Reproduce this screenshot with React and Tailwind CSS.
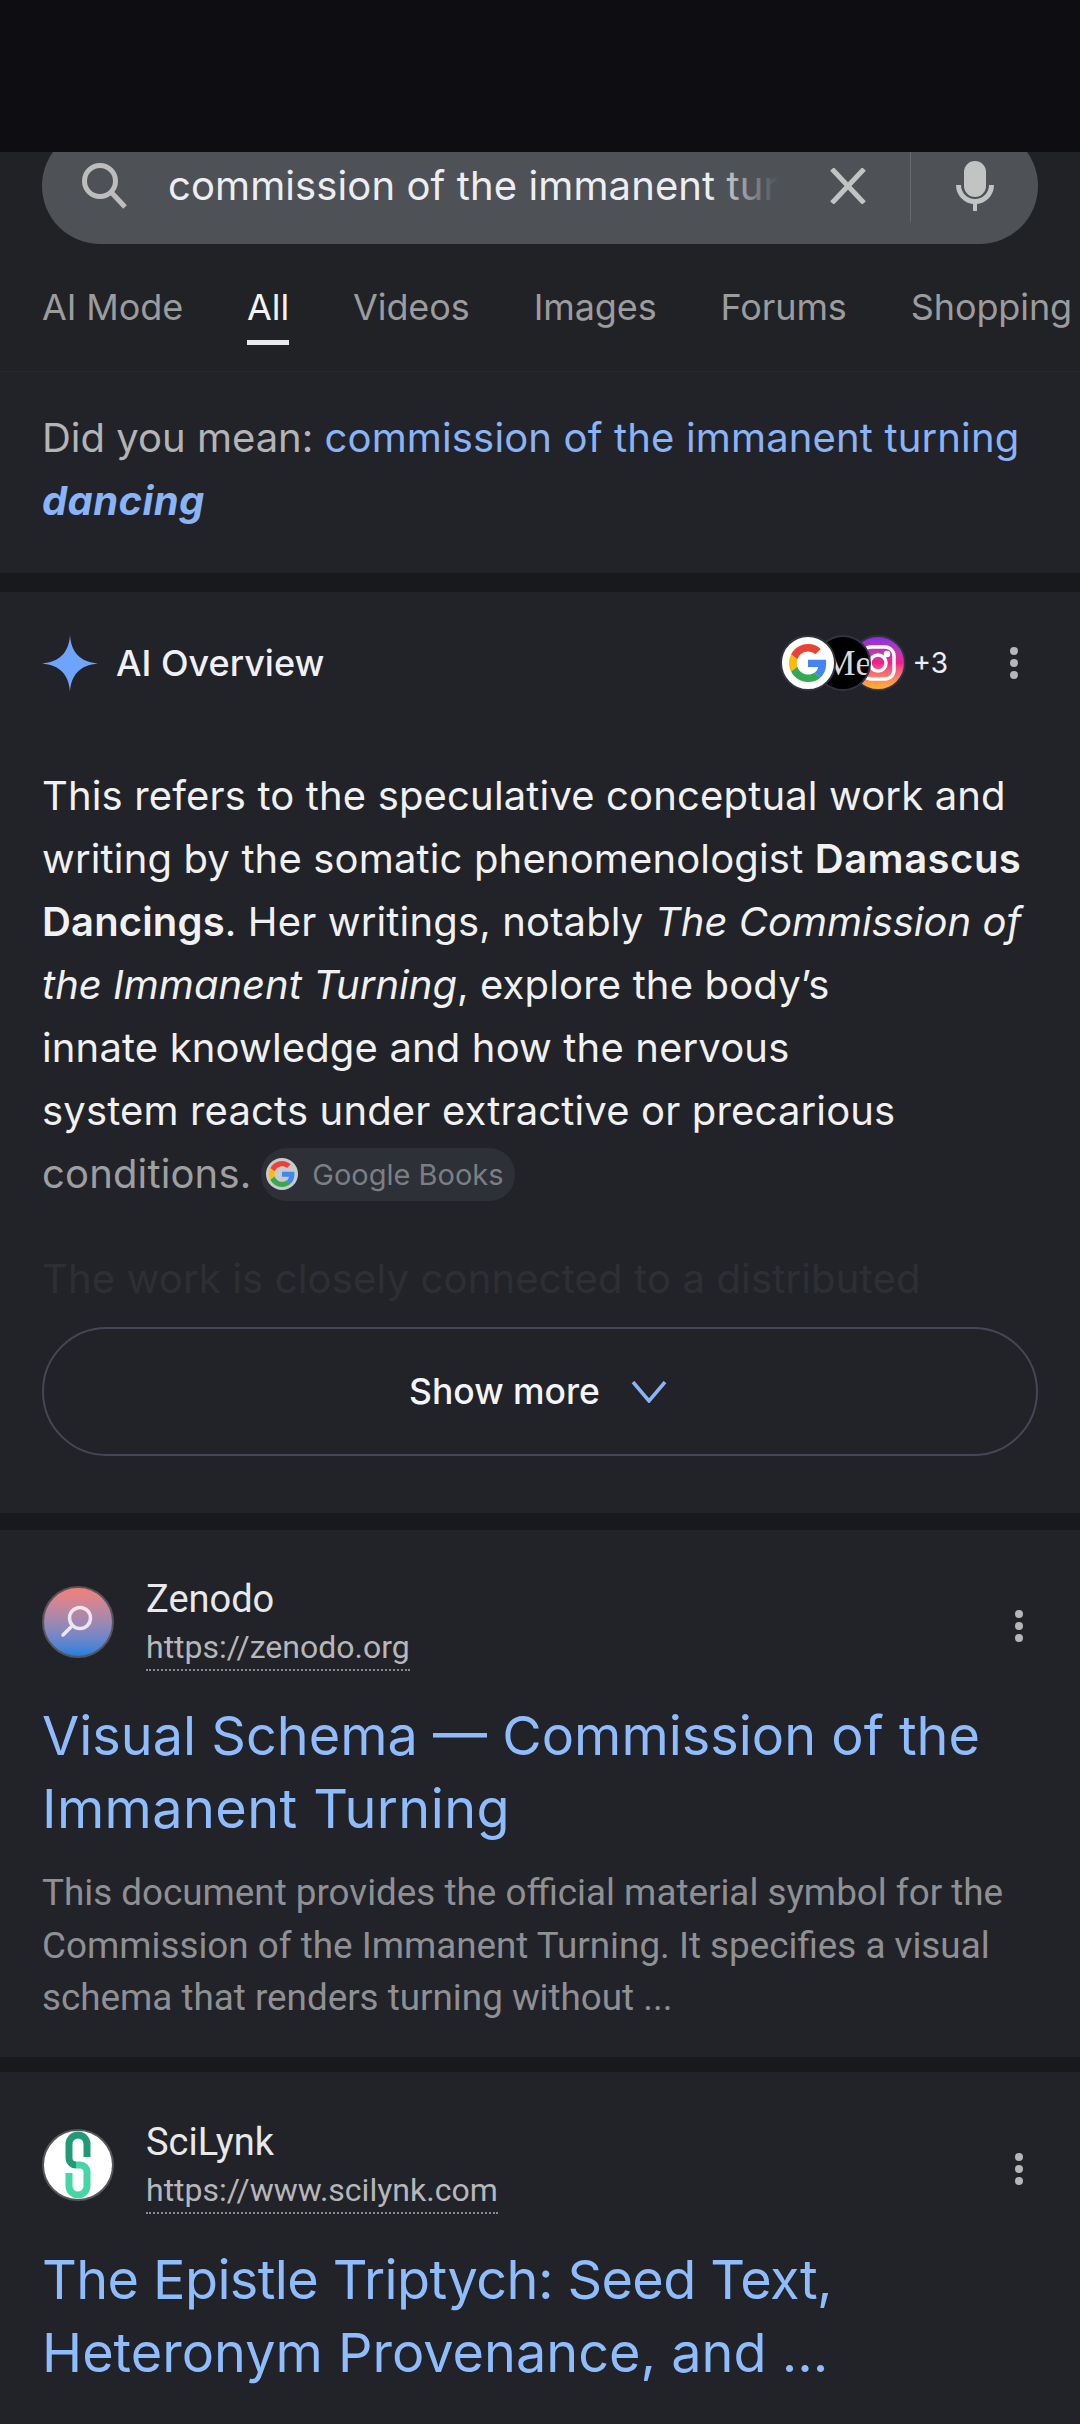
const GSANS = "font-['Inter',sans-serif]";
const ROBOTO = "font-['Roboto',sans-serif]";

function GoogleG({ size = 40 }) {
  return (
    <svg width={size} height={size} viewBox="0 0 48 48">
      <path fill="#EA4335" d="M24 9.5c3.5 0 6.7 1.2 9.2 3.6l6.9-6.9C35.9 2.4 30.5 0 24 0 14.6 0 6.5 5.4 2.6 13.2l8 6.2C12.5 13.7 17.8 9.5 24 9.5z" />
      <path fill="#4285F4" d="M47 24.5c0-1.6-.1-3.1-.4-4.5H24v9h12.9c-.6 3-2.2 5.5-4.7 7.2l7.7 6c4.5-4.2 7.1-10.3 7.1-17.7z" />
      <path fill="#FBBC05" d="M10.6 28.6c-.5-1.4-.8-3-.8-4.6s.3-3.2.8-4.6l-8-6.2C.9 16.5 0 20.1 0 24s.9 7.5 2.6 10.8l8-6.2z" />
      <path fill="#34A853" d="M24 48c6.5 0 11.9-2.1 15.9-5.8l-7.7-6c-2.2 1.4-4.9 2.3-8.2 2.3-6.2 0-11.5-4.2-13.4-9.9l-8 6.2C6.5 42.6 14.6 48 24 48z" />
    </svg>
  );
}

function Dots() {
  return (
    <div className="flex flex-col gap-[4px]">
      <span className="w-[8px] h-[8px] rounded-full bg-[#b5b6b8]" />
      <span className="w-[8px] h-[8px] rounded-full bg-[#b5b6b8]" />
      <span className="w-[8px] h-[8px] rounded-full bg-[#b5b6b8]" />
    </div>
  );
}

function Tab({ text, active }) {
  return (
    <div className={`relative whitespace-nowrap ${active ? "text-[#f1f3f4]" : "text-[#9b9c9e]"}`}>
      {text}
      {active && <span className="absolute left-0 right-0 top-[58px] h-[5px] bg-[#e8eaed]" />}
    </div>
  );
}

function ZenodoIcon() {
  return (
    <div className="w-[72px] h-[72px] mt-[11px] rounded-full border-2 border-[#54565a] bg-gradient-to-b from-[#f47f78] to-[#1a7fe0] flex items-center justify-center shrink-0">
      <svg width="40" height="40" viewBox="0 0 40 40" fill="none" stroke="#eee6ee" strokeWidth="3.5">
        <circle cx="22" cy="16" r="10.5" />
        <path d="M14 24 L5 33" strokeLinecap="round" />
      </svg>
    </div>
  );
}

function SciLynkIcon() {
  return (
    <div className="w-[72px] h-[72px] mt-[11px] rounded-full border-2 border-[#54565a] bg-white flex items-center justify-center shrink-0 overflow-hidden">
      <svg width="34" height="68" viewBox="0 0 34 68" fill="none" strokeWidth="7">
        <path d="M26 26 V13 A9 9 0 0 0 8 13 V27 A7 7 0 0 0 15 34" stroke="#239a77" />
        <path d="M8 42 V55 A9 9 0 0 0 26 55 V41 A7 7 0 0 0 19 34 H15" stroke="#45d6a4" />
      </svg>
    </div>
  );
}

function SourceHead({ icon, name, url, pt }) {
  return (
    <div className={`flex items-start px-[42px] ${pt}`}>
      {icon}
      <div className={`ml-[32px] flex-1 ${ROBOTO}`}>
        <div className="text-[38px] leading-[48px] text-[#e8e9ea]">{name}</div>
        <div className="mt-[5px] text-[32px] leading-[38px] text-[#b6b7ba]">
          <span className="inline-block border-b-2 border-dotted border-[#8a8b8e] pb-[3px]">{url}</span>
        </div>
      </div>
      <div className="mt-[35px] mr-[15px]">
        <Dots />
      </div>
    </div>
  );
}

export default function App() {
  return (
    <div className={`w-[1080px] h-[2424px] overflow-hidden bg-[#222328] ${GSANS}`}>
      {/* status bar area */}
      <div className="relative z-10 h-[152px] bg-[#0e0e12]" />

      {/* search */}
      <div className="h-[220px] flex flex-col border-b border-[#26272c] bg-[#212226]">
        <div className="mx-[42px] mt-[-24px] h-[116px] shrink-0 rounded-[58px] bg-[#4e5156] flex items-center">
          <svg width="46" height="46" viewBox="0 0 46 46" fill="none" stroke="#bdbdbd" strokeWidth="5" className="ml-[40px] shrink-0">
            <circle cx="18" cy="18" r="15.5" />
            <path d="M29 29 L43 44" />
          </svg>
          <div className="relative ml-[40px] w-[610px] shrink-0 overflow-hidden whitespace-nowrap text-[40px] tracking-[0.1px] text-[#eceef2]">
            commission of the immanent tur
            <span className="absolute inset-y-0 right-0 w-[70px] bg-gradient-to-r from-transparent to-[#4e5156]" />
          </div>
          <svg width="36" height="36" viewBox="0 0 36 36" fill="none" stroke="#c2c3c3" strokeWidth="5" className="ml-[52px] shrink-0">
            <path d="M2 1 L34 35 M34 1 L2 35" />
          </svg>
          <div className="ml-[44px] h-[94px] w-px bg-[#66686d] self-start" />
          <svg width="38" height="50" viewBox="0 0 38 50" fill="none" className="ml-[45px] shrink-0">
            <rect x="8" y="0" width="22" height="36" rx="11" fill="#c2c3c3" />
            <path d="M2.5 24 A16.5 16.5 0 0 0 35.5 24" stroke="#c2c3c3" strokeWidth="5" />
            <path d="M19 40 V50" stroke="#c2c3c3" strokeWidth="4" />
          </svg>
        </div>
        <div className="mt-[38px] px-[42px] flex gap-[64px] text-[36px] tracking-[-0.1px] leading-[50px]">
          <Tab text="AI Mode" />
          <Tab text="All" active />
          <Tab text="Videos" />
          <Tab text="Images" />
          <Tab text="Forums" />
          <Tab text="Shopping" />
        </div>
      </div>

      {/* did you mean */}
      <div className="h-[201px] px-[42px] pt-[34px] text-[40px] leading-[63px] text-[#b3b4b5]">
        Did you mean: <span className="text-[#8ab4f8] tracking-[0.15px]">commission of the immanent turning</span>
        <br />
        <span className="text-[#8ab4f8] font-bold italic tracking-[0.4px]">dancing</span>
      </div>
      <div className="h-[19px] bg-[#18191d]" />

      {/* AI overview */}
      <div className="h-[921px] relative px-[42px]">
        <div className="flex items-center pt-[43px] h-[99px]">
          <svg width="56" height="57" viewBox="0 0 56 57" className="shrink-0">
            <path fill="#6ea4fb" d="M28 0 C29 17 38 27 56 28.5 C38 30 29 40 28 57 C27 40 18 30 0 28.5 C18 27 27 17 28 0 Z" />
          </svg>
          <div className="ml-[18px] text-[36px] font-medium text-[#f0f1f8]">AI Overview</div>
          <div className="ml-auto mr-[20px] flex items-center">
            <div className="relative z-30 w-[56px] h-[56px] rounded-full bg-white border-2 border-[#2f3340] flex items-center justify-center">
              <GoogleG size={38} />
            </div>
            <div className="relative z-20 ml-[-21px] w-[56px] h-[56px] rounded-full bg-black border-2 border-[#2f3340] overflow-hidden flex items-center justify-center">
              <span className="font-['Liberation_Serif',serif] text-[36px] pl-[8px] text-[#d8d8d8]">Me</span>
            </div>
            <div className="relative z-10 ml-[-21px] w-[56px] h-[56px] rounded-full border-2 border-[#2f3340] bg-gradient-to-b from-[#8a2be2] via-[#ee1d8c] to-[#ffb300] flex items-center justify-center">
              <svg width="38" height="38" viewBox="0 0 38 38" fill="none" stroke="#fff" strokeWidth="3.5">
                <rect x="3" y="3" width="32" height="32" rx="9" />
                <circle cx="19" cy="19" r="8" />
                <circle cx="28" cy="10" r="1.5" fill="#fff" />
              </svg>
            </div>
            <div className="ml-[6px] text-[28px] text-[#eceef8]">+3</div>
            <div className="ml-[62px]">
              <Dots />
            </div>
          </div>
        </div>

        <div className="mt-[73px] text-[40px] tracking-[0.15px] leading-[63px] text-[#f0f1f2]">
          <p>
            This refers to the speculative conceptual work and
            <br />
            writing by the somatic phenomenologist <b className="font-semibold tracking-[0.5px]">Damascus</b>
            <br />
            <b className="font-semibold">Dancings</b>. Her writings, notably <i className="tracking-normal">The Commission of</i>
            <br />
            <i className="tracking-normal">the Immanent Turning</i>, explore the body’s
            <br />
            innate knowledge and how the nervous
            <br />
            system reacts under extractive or precarious
            <br />
            <span className="text-[#9e9fa1]">conditions.</span>
            <span className="inline-flex items-center align-middle ml-[10px] h-[53px] w-[254px] rounded-[26px] bg-[#2d3037] text-[29px] tracking-normal text-[#7c7e84] mt-[-6px]">
              <span className="ml-[5px] w-[32px] h-[32px] shrink-0 rounded-full bg-[#c9cacc] flex items-center justify-center">
                <GoogleG size={26} />
              </span>
              <span className="ml-[14px] whitespace-nowrap">Google Books</span>
            </span>
          </p>
          <p className="mt-[42px] text-[#2e2f34]">The work is closely connected to a distributed</p>
        </div>

        <div className="absolute left-[42px] right-[42px] top-[735px] h-[129px] rounded-[65px] border-2 border-[#444755] flex items-center justify-center text-[35.5px] font-medium text-[#f4f4fc]">
          <span className="ml-[-4px]">Show more</span>
          <svg width="36" height="22" viewBox="0 0 36 22" fill="none" stroke="#8ab4f8" strokeWidth="3.5" className="ml-[31px]">
            <path d="M2 1 L18 20 L34 1" />
          </svg>
        </div>
      </div>
      <div className="h-[17px] bg-[#18191d]" />

      {/* Zenodo */}
      <div className="h-[527px]">
        <SourceHead icon={<ZenodoIcon />} name="Zenodo" url="https://zenodo.org" pt="pt-[45px]" />
        <div className="mt-[28px] px-[42px] text-[54px] leading-[73px] text-[#8ebcfd]">
          Visual Schema — Commission of the
          <br />
          <span className="tracking-[0.4px]">Immanent Turning</span>
        </div>
        <div className={`mt-[22px] px-[42px] text-[36.8px] leading-[52.5px] text-[#8f9094] ${ROBOTO}`}>
          This document provides the official material symbol for the
          <br />
          Commission of the Immanent Turning. It specifies a visual
          <br />
          schema that renders turning without ...
        </div>
      </div>
      <div className="h-[15px] bg-[#18191d]" />

      {/* SciLynk */}
      <div>
        <SourceHead icon={<SciLynkIcon />} name="SciLynk" url="https://www.scilynk.com" pt="pt-[46px]" />
        <div className="mt-[29px] px-[42px] text-[54px] leading-[73px] text-[#8ebcfd]">
          <span className="tracking-[-0.6px]">The Epistle Triptych: Seed Text,</span>
          <br />
          Heteronym Provenance, and ...
        </div>
      </div>
    </div>
  );
}
